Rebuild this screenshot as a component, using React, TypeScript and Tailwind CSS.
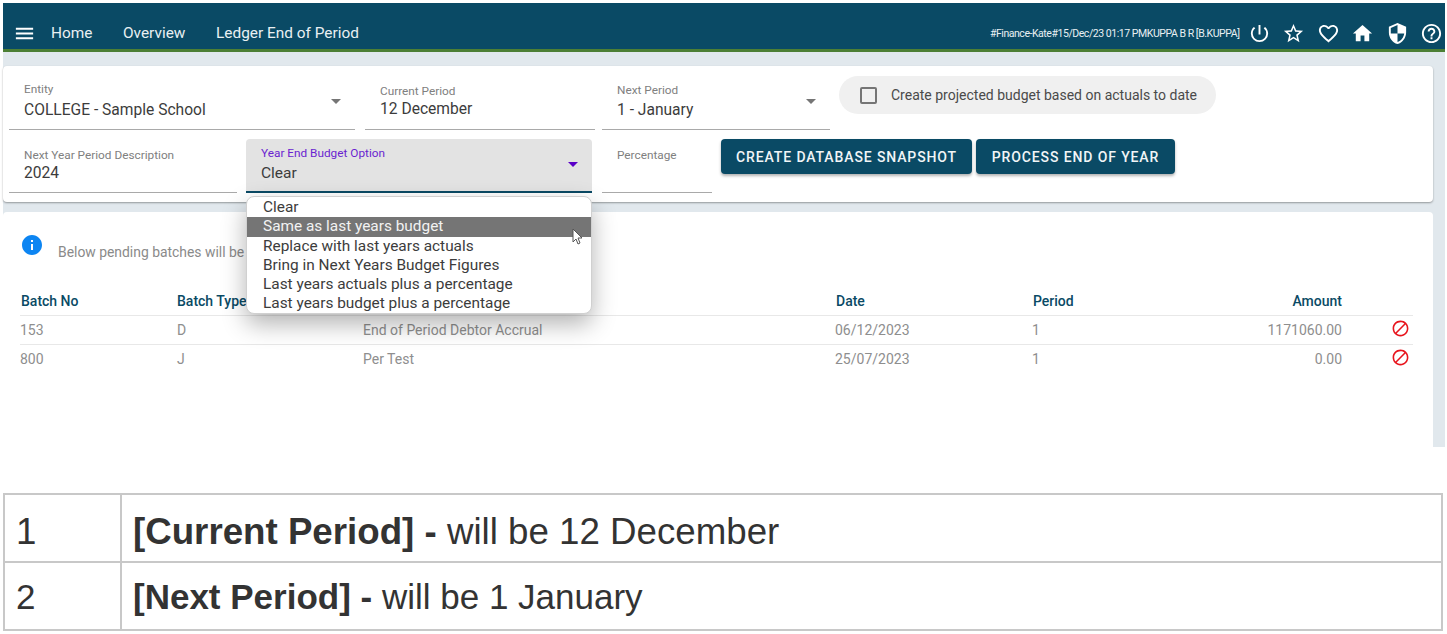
import { MdArrowDropDown, MdBlock, MdFavoriteBorder, MdHelpOutline, MdHome, MdInfo, MdMenu, MdPowerSettingsNew, MdSecurity, MdStarBorder } from "react-icons/md"

const budgetOptions = [
  "Clear",
  "Same as last years budget",
  "Replace with last years actuals",
  "Bring in Next Years Budget Figures",
  "Last years actuals plus a percentage",
  "Last years budget plus a percentage",
]

const batches = [
  { no: "153", type: "D", desc: "End of Period Debtor Accrual", date: "06/12/2023", period: "1", amount: "1171060.00" },
  { no: "800", type: "J", desc: "Per Test", date: "25/07/2023", period: "1", amount: "0.00" },
]

function Field({
  label,
  value,
  width,
  arrow,
  top = "pt-[7px]",
  gap = "mt-[3px]",
}: {
  label: string
  value?: string
  width: string
  arrow?: boolean
  top?: string
  gap?: string
}) {
  return (
    <div className={`relative h-[54px] shrink-0 border-b border-[#a9a9a9] pl-[15px] ${top} ${width}`}>
      <div className="text-[11.8px] leading-[14px] text-[#808080]">{label}</div>
      <div className={`text-[15.6px] leading-[20px] text-[#3c3c3c] ${gap}`}>{value}</div>
      {arrow && <MdArrowDropDown className="absolute right-[7px] top-[13px] text-[24px] text-[#757575]" />}
    </div>
  )
}

function ActionButton({ children, width }: { children: string; width: string }) {
  return (
    <button className={`h-[35px] shrink-0 rounded-[4px] bg-[#0a4a65] pt-[1px] text-[14px] font-medium tracking-[0.88px] text-[#f1f5f7] shadow-[0_2px_3px_rgba(0,0,0,0.3)] ${width}`}>
      {children}
    </button>
  )
}

export default function App() {
  return (
    <div className="h-[634px] w-[1447px] overflow-hidden bg-white font-['Roboto',sans-serif]">
      <div className="relative ml-[3px] mt-[3px] h-[444px] w-[1442px] bg-[#e1e8ed]">
        {/* Top bar */}
        <header className="flex h-[49px] items-center border-b-[3px] border-[#4c7f34] bg-[#0a4a65] pr-[2px] pl-[10px] pt-[15px] text-white">
          <MdMenu className="text-[23px]" />
          <nav className="ml-[15px] flex gap-[30.6px] text-[15.4px] text-[#e9f0f3]">
            <span>Home</span>
            <span>Overview</span>
            <span>Ledger End of Period</span>
          </nav>
          <div className="ml-auto flex items-center">
            <span className="mr-[8px] text-[10.5px] tracking-[-0.45px] text-[#e9f0f3]">#Finance-Kate#15/Dec/23 01:17 PMKUPPA B R [B.KUPPA]</span>
            <div className="flex items-center gap-[11.5px] text-[23px]">
              <MdPowerSettingsNew />
              <MdStarBorder />
              <MdFavoriteBorder />
              <MdHome />
              <MdSecurity />
              <MdHelpOutline />
            </div>
          </div>
        </header>

        {/* Period form */}
        <section className="mt-[14px] h-[136px] w-[1430px] rounded-[4px] bg-white pl-[6px] pt-[10px] shadow-[0_1px_2px_rgba(0,0,0,0.35)]">
          <div className="flex gap-[10px]">
            <Field label="Entity" value="COLLEGE - Sample School" width="w-[346px]" top="pt-[6px]" gap="mt-[4px]" arrow />
            <Field label="Current Period" value="12 December" width="w-[230px]" top="pt-[8px]" gap="mt-[1px]" />
            <div className="-ml-[3px]">
              <Field label="Next Period" value="1 - January" width="w-[228px]" arrow />
            </div>
            <div className="-ml-[1px] flex h-[38px] w-[377px] items-center rounded-full bg-[#f0f0f0] pl-[21px] text-[14px] text-[#4a4a4a]">
              <span className="mr-[14px] size-[17px] rounded-[2px] border-2 border-[#757575]" />
              Create projected budget based on actuals to date
            </div>
          </div>
          <div className="mt-[9px] flex gap-[9px]">
            <Field label="Next Year Period Description" value="2024" width="w-[228px]" top="pt-[9px]" gap="mt-[1px]" />
            <div className="relative h-[54px] w-[346px] shrink-0 rounded-t-[4px] border-b-2 border-[#0a4a65] bg-[#e3e3e3] pl-[15px] pt-[7px]">
              <div className="text-[11.8px] leading-[14px] text-[#6a1fd0]">Year End Budget Option</div>
              <div className="mt-[3px] text-[15.5px] leading-[20px] text-[#3c3c3c]">Clear</div>
              <MdArrowDropDown className="absolute right-[7px] top-[13px] text-[24px] text-[#5a00c8]" />
            </div>
            <div className="ml-[1px]">
              <Field label="Percentage" width="w-[110px]" top="pt-[9px]" />
            </div>
            <div className="flex gap-[4px]">
              <ActionButton width="w-[251px]">CREATE DATABASE SNAPSHOT</ActionButton>
              <ActionButton width="w-[199px]">PROCESS END OF YEAR</ActionButton>
            </div>
          </div>
        </section>

        {/* Pending batches */}
        <section className="mt-[10px] h-[235px] w-[1430px] rounded-t-[4px] bg-white pl-[17px] pr-[20px] pt-[21px]">
          <div className="flex h-[36px] text-[13.9px] text-[#8a8a8a]">
            <MdInfo className="text-[24px] text-[#0d85f2]" />
            <span className="ml-[14px] mt-[9px]">Below pending batches will be</span>
          </div>
          <table className="mt-[18px] w-full table-fixed text-[14px] text-[#8e8e8e]">
            <thead>
              <tr className="h-[28px] border-b border-[#e8e8e8] text-left text-[#0a4a65]">
                <th className="w-[157px] pl-[1px] pt-[2px] font-medium">Batch No</th>
                <th className="w-[186px] pt-[2px] font-medium">Batch Type</th>
                <th className="w-[472px] font-medium"></th>
                <th className="w-[197px] pl-[1px] pt-[2px] font-medium">Date</th>
                <th className="w-[233px] pl-[1px] pt-[2px] font-medium">Period</th>
                <th className="w-[77px] pt-[2px] text-right font-medium">Amount</th>
                <th></th>
              </tr>
            </thead>
            <tbody>
              {batches.map((b) => (
                <tr key={b.no} className="h-[29px] border-b border-[#e8e8e8] last:border-b-0">
                  <td className="pt-[2px]">{b.no}</td>
                  <td className="pt-[2px]">{b.type}</td>
                  <td className="pt-[2px]">{b.desc}</td>
                  <td className="pt-[2px]">{b.date}</td>
                  <td className="pt-[2px]">{b.period}</td>
                  <td className="pt-[2px] text-right">{b.amount}</td>
                  <td className="pb-[2px]">
                    <MdBlock className="ml-[49px] text-[19px] text-[#e8141c]" />
                  </td>
                </tr>
              ))}
            </tbody>
          </table>
        </section>

        {/* Open select menu */}
        <ul className="absolute left-[243px] top-[193px] z-10 h-[118px] w-[346px] overflow-hidden rounded-[8px] border border-[#d0d0d0] bg-white pt-[1px] text-[15.4px] leading-[19.3px] text-[#3c3c3c] shadow-[0_10px_24px_rgba(0,0,0,0.3)]">
          {budgetOptions.map((o, i) => (
            <li key={o} className={i === 1 ? "bg-[#757575] pl-[16px] text-[#f2f2f2]" : "pl-[16px]"}>
              {o}
            </li>
          ))}
        </ul>

        {/* Mouse pointer */}
        <svg className="absolute left-[569px] top-[225px] z-20" width="12" height="17" viewBox="0 0 12 17">
          <path d="M1 1v13l3-3 2 5 2-1-2-5h4z" fill="#fff" stroke="#555" strokeWidth="1" />
        </svg>
      </div>

      {/* Callout table */}
      <table className="ml-[3px] mt-[46px] w-[1440px] table-fixed border-collapse font-['Liberation_Sans',sans-serif] text-[#333]">
        <tbody>
          <tr className="h-[68px] text-[36.7px]">
            <td className="w-[117px] border-2 border-[#c8c8c8] pl-[11px] pt-[7px]">1</td>
            <td className="border-2 border-[#c8c8c8] pl-[11px] pt-[7px]">
              <b>[Current Period] -</b> will be 12 December
            </td>
          </tr>
          <tr className="h-[68px] text-[35px]">
            <td className="border-2 border-[#c8c8c8] pl-[11px] pt-[2px]">2</td>
            <td className="border-2 border-[#c8c8c8] pl-[11px] pt-[2px]">
              <b>[Next Period] -</b> will be 1 January
            </td>
          </tr>
        </tbody>
      </table>
    </div>
  )
}
